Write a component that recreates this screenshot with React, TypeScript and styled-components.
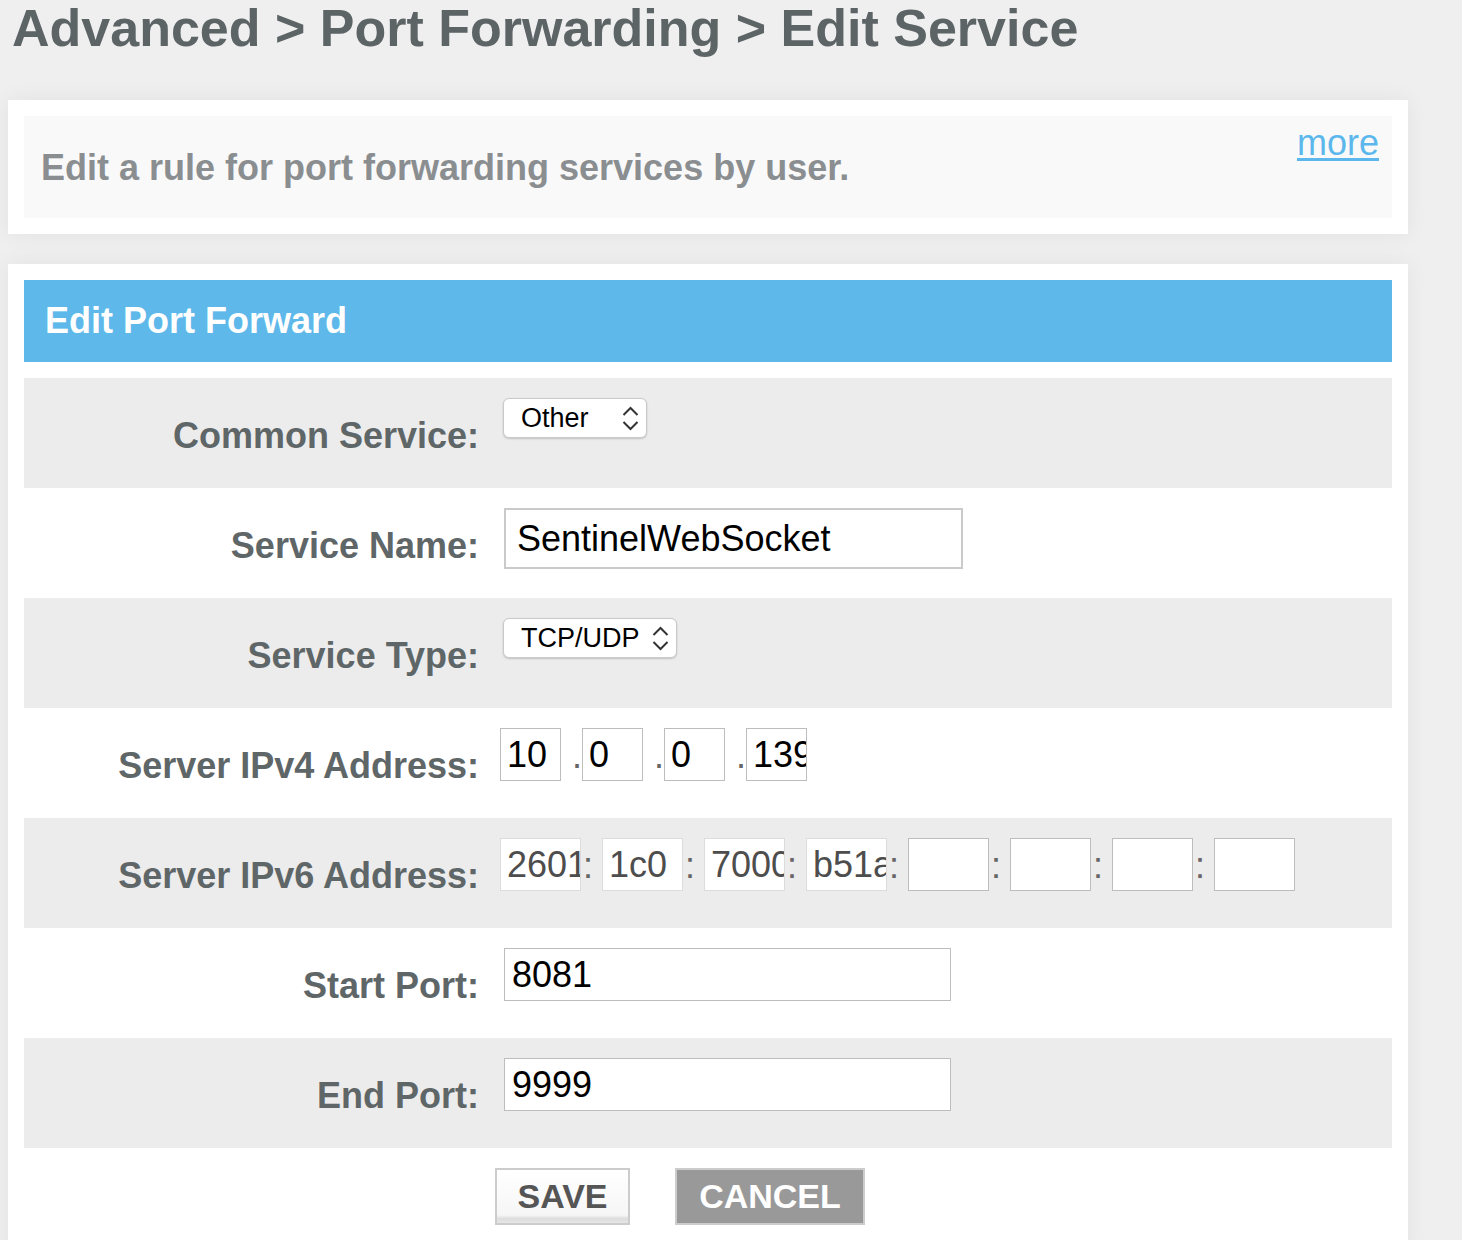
import React from "react";
import styled, { createGlobalStyle } from "styled-components";

const Global = createGlobalStyle`
  html, body {
    margin: 0;
    padding: 0;
    background: #efefef;
    font-family: "Liberation Sans", Arial, Helvetica, sans-serif;
  }
`;

const Page = styled.div`
  width: 1400px;
  padding: 0 8px 0 8px;
`;

const Title = styled.h1`
  margin: 0 0 46px 0;
  padding: 2px 0 0 4px;
  font-size: 52px;
  line-height: 52px;
  font-weight: 700;
  color: #5d6466;
  white-space: nowrap;
`;

const Card = styled.section<{ $gap?: number }>`
  background: #fff;
  padding: 16px;
  box-shadow: 0 0 22px rgba(0, 0, 0, 0.06);
  margin-bottom: ${(p) => p.$gap ?? 0}px;
`;

const InfoBox = styled.div`
  display: flex;
  justify-content: space-between;
  background: #f9f9f9;
  height: 102px;
  padding: 0 13px 0 17px;
  box-sizing: border-box;
`;

const InfoText = styled.p`
  margin: 0;
  align-self: center;
  font-size: 36px;
  line-height: 41px;
  font-weight: 700;
  color: #8a8e90;
`;

const MoreLink = styled.a`
  margin-top: 6px;
  font-size: 36px;
  line-height: 41px;
  color: #5cb8ec;
  text-decoration: underline;
  text-underline-offset: 3px;
  align-self: flex-start;
  cursor: pointer;
`;

const Header = styled.h2`
  margin: 0 0 16px 0;
  height: 82px;
  display: flex;
  align-items: center;
  padding: 0 0 0 21px;
  background: #5eb8ea;
  color: #fff;
  font-size: 36px;
  font-weight: 700;
`;

const Row = styled.div<{ $shade: boolean }>`
  display: grid;
  grid-template-columns: 466px 1fr;
  height: 110px;
  background: ${(p) => (p.$shade ? "#ececec" : "#ffffff")};
`;

const Label = styled.label`
  align-self: center;
  text-align: right;
  padding: 4px 11px 0 0;
  font-size: 36px;
  line-height: 41px;
  font-weight: 700;
  color: #5f6668;
`;

const Field = styled.div<{ $indent: number }>`
  padding: 20px 0 0 ${(p) => p.$indent}px;
  display: flex;
  align-items: flex-start;
`;

const SelectWrap = styled.div<{ $w: number }>`
  position: relative;
  width: ${(p) => p.$w}px;
  height: 40px;
`;

const Select = styled.select`
  appearance: none;
  -webkit-appearance: none;
  width: 100%;
  height: 100%;
  box-sizing: border-box;
  border: 1px solid #c9c9c9;
  border-radius: 6px;
  background: #fff;
  box-shadow: 0 1px 2px rgba(0, 0, 0, 0.18);
  padding: 0 0 0 17px;
  font-family: "Liberation Sans", Arial, sans-serif;
  font-size: 27px;
  color: #000;
  outline: none;
`;

const Chevrons = styled.svg`
  position: absolute;
  right: 8px;
  top: 8px;
  pointer-events: none;
`;

const TextInput = styled.input<{ $w: number; $h: number; $b: number }>`
  width: ${(p) => p.$w}px;
  height: ${(p) => p.$h}px;
  box-sizing: border-box;
  border: ${(p) => p.$b}px solid ${(p) => (p.$b > 1 ? "#cacaca" : "#bdbdbd")};
  background: #fff;
  padding: 0 0 0 ${(p) => (p.$b > 1 ? 11 : 7)}px;
  margin: 0;
  font-family: "Liberation Sans", Arial, sans-serif;
  font-size: 36px;
  color: #000;
  outline: none;
  border-radius: 0;
`;

const AddrGroup = styled.div`
  display: flex;
  align-items: flex-end;
`;

const Octet = styled.input<{ $w: number; $locked?: boolean }>`
  width: ${(p) => p.$w}px;
  height: 53px;
  box-sizing: border-box;
  border: 1px solid ${(p) => (p.$locked ? "#dcdcdc" : "#bdbdbd")};
  background: #fff;
  padding: 0 0 0 6px;
  margin: 0;
  font-family: "Liberation Sans", Arial, sans-serif;
  font-size: 36px;
  color: ${(p) => (p.$locked ? "#4d4d4d" : "#000")};
  outline: none;
  border-radius: 0;
`;

const Sep = styled.span<{ $align: "left" | "right" }>`
  width: 21px;
  box-sizing: border-box;
  text-align: ${(p) => p.$align};
  padding: 0 0 7px ${(p) => (p.$align === "left" ? "2px" : "0")};
  font-size: 36px;
  line-height: 36px;
  color: #666;
`;

const Buttons = styled.div`
  display: flex;
  gap: 45px;
  padding: 20px 0 16px 471px;
`;

const Button = styled.button<{ $primary?: boolean; $w: number }>`
  width: ${(p) => p.$w}px;
  height: 57px;
  box-sizing: border-box;
  border: 2px solid #cccccc;
  border-radius: 0;
  padding: 0;
  font-family: "Liberation Sans", Arial, sans-serif;
  font-size: 34px;
  font-weight: 700;
  cursor: pointer;
  color: ${(p) => (p.$primary ? "#555555" : "#ffffff")};
  background: ${(p) =>
    p.$primary
      ? "linear-gradient(to bottom, #ffffff 0%, #f6f6f6 85%, #dddddd 92%, #e6e6e6 100%)"
      : "#999999"};
`;

const ChevronIcon = () => (
  <Chevrons width="17" height="26" viewBox="0 0 17 26">
    <path d="M1.5 9 L8.5 2 L15.5 9" fill="none" stroke="#333" strokeWidth="2" />
    <path d="M1.5 16 L8.5 23 L15.5 16" fill="none" stroke="#333" strokeWidth="2" />
  </Chevrons>
);

const ipv4 = ["10", "0", "0", "139"];
const ipv6 = ["2601", "1c0", "7000", "b51a", "", "", "", ""];

export default function App() {
  return (
    <Page>
      <Global />
      <Title>Advanced &gt; Port Forwarding &gt; Edit Service</Title>

      <Card $gap={30}>
        <InfoBox>
          <InfoText>Edit a rule for port forwarding services by user.</InfoText>
          <MoreLink>more</MoreLink>
        </InfoBox>
      </Card>

      <Card>
        <Header>Edit Port Forward</Header>

        <Row $shade>
          <Label>Common Service:</Label>
          <Field $indent={13}>
            <SelectWrap $w={144}>
              <Select defaultValue="Other">
                <option>Other</option>
              </Select>
              <ChevronIcon />
            </SelectWrap>
          </Field>
        </Row>

        <Row $shade={false}>
          <Label>Service Name:</Label>
          <Field $indent={14}>
            <TextInput $w={459} $h={61} $b={2} defaultValue="SentinelWebSocket" />
          </Field>
        </Row>

        <Row $shade>
          <Label>Service Type:</Label>
          <Field $indent={13}>
            <SelectWrap $w={174}>
              <Select defaultValue="TCP/UDP">
                <option>TCP/UDP</option>
              </Select>
              <ChevronIcon />
            </SelectWrap>
          </Field>
        </Row>

        <Row $shade={false}>
          <Label>Server IPv4 Address:</Label>
          <Field $indent={10}>
            <AddrGroup>
              {ipv4.map((v, i) => (
                <React.Fragment key={i}>
                  {i > 0 && <Sep $align="right">.</Sep>}
                  <Octet $w={61} defaultValue={v} />
                </React.Fragment>
              ))}
            </AddrGroup>
          </Field>
        </Row>

        <Row $shade>
          <Label>Server IPv6 Address:</Label>
          <Field $indent={10}>
            <AddrGroup>
              {ipv6.map((v, i) => (
                <React.Fragment key={i}>
                  {i > 0 && <Sep $align="left">:</Sep>}
                  <Octet $w={81} $locked={v !== ""} defaultValue={v} />
                </React.Fragment>
              ))}
            </AddrGroup>
          </Field>
        </Row>

        <Row $shade={false}>
          <Label>Start Port:</Label>
          <Field $indent={14}>
            <TextInput $w={447} $h={53} $b={1} defaultValue="8081" />
          </Field>
        </Row>

        <Row $shade>
          <Label>End Port:</Label>
          <Field $indent={14}>
            <TextInput $w={447} $h={53} $b={1} defaultValue="9999" />
          </Field>
        </Row>

        <Buttons>
          <Button $primary $w={135}>SAVE</Button>
          <Button $w={190}>CANCEL</Button>
        </Buttons>
      </Card>
    </Page>
  );
}
